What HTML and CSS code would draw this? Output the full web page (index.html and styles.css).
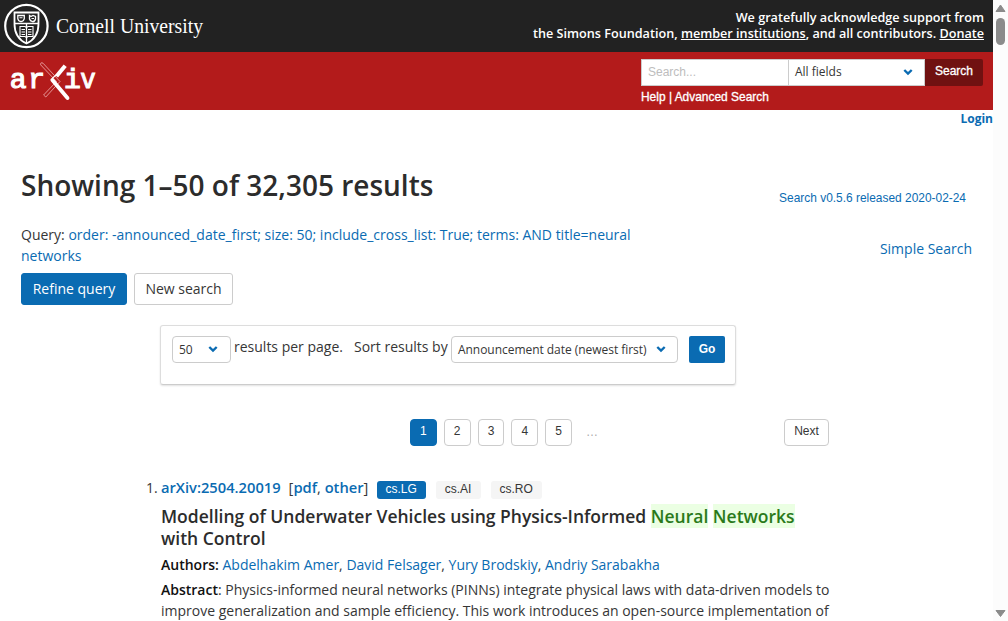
FILE: index.html
```html
<!DOCTYPE html>
<html lang="en">
<head>
<meta charset="utf-8">
<title>Search | arXiv e-print repository</title>
<link rel="stylesheet" href="styles.css">
</head>
<body>
<div class="page">
  <header class="support">
    <svg class="cornell" width="210" height="52" viewBox="0 0 210 52">
      <g fill="none" stroke="#fff">
        <circle cx="26.4" cy="26" r="21.2" stroke-width="2.2"/>
        <path stroke-width="1.8" d="M14.5 12.5H38.5V24C38.5 34 33 40.5 26.5 43.5C20 40.5 14.5 34 14.5 24Z"/>
        <path stroke-width="1.3" d="M15 23.5H38M26.5 24V43M17.8 15.5H24.3V18.5Q24 21 21 21.7Q18 21 17.8 18.5ZM29.5 15.5L31 16.5L33 15.4L35.5 16.5V19Q35 21.5 32.6 21.7Q30 21 29.5 19Z"/>
        <path stroke-width="1.1" d="M20 26.5H25L26.5 27.5L28 26.5H33V36.5H28L26.5 37.5L25 36.5H20ZM21.5 29.5H25M21.5 32H25M21.5 34.5H25M28 29.5H31.5M28 32H31.5M28 34.5H31.5M19.5 17.8H22.5M31.5 18.5H34"/>
      </g>
      <text x="56" y="33.3" textLength="147" lengthAdjust="spacingAndGlyphs">Cornell University</text>
    </svg>
    <p class="thanks"><span class="t1">We gratefully acknowledge support from</span><br><span class="t2">the Simons Foundation, <a>member institutions</a>, and all contributors. <a>Donate</a></span></p>
  </header>
  <div class="banner">
    <svg class="arxiv" width="100" height="58" viewBox="0 52 100 58">
      <g class="mark"><text x="9.8" y="88">a</text><text x="28.3" y="88">r</text><text x="64" y="88">i</text><text class="vee" x="81" y="88">v</text></g>
      <g fill="none">
        <path d="M43 63.2L60 81.5L45.8 97L43.6 95L56.5 81.5L40.6 64.8Q40.4 61.8 43 63.2Z" stroke="#f0b4b4" stroke-width=".8"/>
        <path d="M65.2 65.8L56.5 76.2" stroke="#fff" stroke-width="4"/>
        <path d="M52.3 80L67.5 98" stroke="#fff" stroke-width="3.8" stroke-linecap="round"/>
        <path d="M57 74.5Q51 78.5 52.3 80" stroke="#fff" stroke-width="1.5"/>
      </g>
    </svg>
    <div class="mini-search">
      <div class="fields"><div class="query-box">Search...</div><div class="field-box"><span>All fields</span><svg class="chev" viewBox="0 0 10 8"><path d="M1.3 2L5 5.5L8.7 2"/></svg></div><div class="search-btn">Search</div></div>
      <p class="help"><a>Help</a> | <a>Advanced Search</a></p>
    </div>
  </div>
  <div class="login"><a>Login</a></div>
  <main>
    <div class="heading"><h1>Showing 1–50 of 32,305 results</h1><a class="version">Search v0.5.6 released 2020-02-24</a></div>
    <div class="query-row">
      <div class="query">Query: <a>order: -announced_date_first; size: 50; include_cross_list: True; terms: AND title=neural<br>networks</a></div>
      <a class="simple">Simple Search</a>
    </div>
    <div class="buttons"><a class="btn primary">Refine query</a><a class="btn">New search</a></div>
    <div class="sortbox">
      <div class="select size"><span>50</span><svg class="chev" viewBox="0 0 10 8"><path d="M1.3 2L5 5.5L8.7 2"/></svg></div>
      <span class="per">results per page.</span><span class="sort">Sort results by</span>
      <div class="select order"><span>Announcement date (newest first)</span><svg class="chev" viewBox="0 0 10 8"><path d="M1.3 2L5 5.5L8.7 2"/></svg></div>
      <div class="go">Go</div>
    </div>
    <nav class="pages"><a class="current">1</a><a>2</a><a>3</a><a>4</a><a>5</a><span>…</span><a class="next">Next</a></nav>
    <article class="result">
      <span class="num">1.</span>
      <div class="body">
        <div class="ids"><a class="aid">arXiv:2504.20019</a><span class="formats">[<a>pdf</a>, <a>other</a>]</span><span class="tag lead">cs.LG</span><span class="tag">cs.AI</span><span class="tag ro">cs.RO</span></div>
        <h2><span class="ti">Modelling of Underwater Vehicles using Physics-Informed <mark>Neural</mark> <mark>Networks</mark></span><br>with Control</h2>
        <p class="authors"><b>Authors:</b> <a>Abdelhakim Amer</a>, <a>David Felsager</a>, <a>Yury Brodskiy</a>, <a>Andriy Sarabakha</a></p>
        <p class="abstract"><b>Abstract</b>: Physics-informed neural networks (PINNs) integrate physical laws with data-driven models to<br>improve generalization and sample efficiency. This work introduces an open-source implementation of</p>
      </div>
    </article>
  </main>
</div>
<div class="scrollbar">
  <svg width="15" height="14" viewBox="0 0 15 14"><path d="M7.5 5L12 11.5H3Z" fill="#8b8b8b" stroke="#8b8b8b" stroke-linejoin="round"/></svg>
  <i></i>
  <svg class="down" width="15" height="14" viewBox="0 0 15 14"><path d="M3 3.5H12L7.5 9.5Z" fill="#8b8b8b" stroke="#8b8b8b" stroke-linejoin="round"/></svg>
</div>
</body>
</html>
```
FILE: styles.css
```css
* { box-sizing: border-box; }
body { margin: 0; height: 621px; overflow: hidden; display: flex; background: #fff; color: #363636; font: 14px/21px "Open Sans", sans-serif; }
h1, h2, p { margin: 0; }
a { color: #0a6bb2; white-space: nowrap; }
.page { width: 993px; height: 621px; overflow: hidden; }

.support { height: 52px; background: #222; display: flex; justify-content: space-between; }
.cornell text { font: 20.5px "Liberation Serif", serif; fill: #fff; }
.thanks { padding: 9px 9px 0 0; text-align: right; color: #fff; font-size: 12.64px; font-weight: 600; line-height: 16px; white-space: nowrap; }
.thanks a { color: #fff; text-decoration: underline; }

.banner { height: 58px; background: #b31b1b; display: flex; justify-content: space-between; }
.mark text { font: 28px "Liberation Mono", monospace; fill: #fff; stroke: #fff; stroke-width: 1.2px; }
.mark .vee { font: 28px "Liberation Sans", sans-serif; stroke-width: .9px; }
.mini-search { width: 342px; margin-right: 10px; padding-top: 7px; font: 12px/18px "Liberation Sans", sans-serif; }
.fields { display: flex; height: 27px; }
.query-box { width: 148px; border: 1px solid #ccc; padding: 3px 6px; background: #fff; color: #bdbdbd; }
.field-box { width: 136px; border: 1px solid #ccc; border-left: 0; padding: 0 11px 2px 6px; background: #fff; display: flex; align-items: center; justify-content: space-between; font: 12px/23px "Open Sans", sans-serif; }
.search-btn { width: 58px; background: #701111; color: #fff; text-align: center; line-height: 24px; border-radius: 0 2px 2px 0; -webkit-text-stroke: .3px #fff; }
.chev { width: 10px; height: 8px; flex: none; fill: none; stroke: #0a6bb2; stroke-width: 2.4; }
.help, .help a { color: #fff; }
.help { margin-top: 2px; font-size: 11.95px; -webkit-text-stroke: .3px #fff; }

.login { height: 17px; text-align: right; font-size: 12px; font-weight: 700; line-height: 18px; }
main { padding-left: 21px; }
.heading { height: 97px; padding-top: 41px; display: flex; justify-content: space-between; }
h1 { font-size: 28px; line-height: 34px; font-weight: 600; white-space: nowrap; color: #2c2c2c; }
.version { margin: 20px 27px 0 0; font: 11.93px/20px "Liberation Sans", sans-serif; }
.query-row { display: flex; justify-content: space-between; height: 49px; }
.query { white-space: nowrap; }
.simple { margin: 14px 21px 0 0; }
.buttons { display: flex; gap: 7px; height: 32px; }
.btn { width: 99px; height: 32px; border: 1px solid #ccc; border-radius: 3px; text-align: center; line-height: 30px; color: #363636; }
.btn.primary { width: 106px; background: #0a6bb2; border-color: #0a6bb2; color: #fff; }

.sortbox { width: 576px; height: 60px; margin: 20px 0 0 139px; padding: 10px 10px 0 11px; border: 1px solid #ddd; border-bottom-color: #ccc; border-radius: 3px; box-shadow: 0 1px 2px rgba(0,0,0,.12); display: flex; white-space: nowrap; }
.select { flex: none; height: 27px; border: 1px solid #ccc; border-radius: 4px; display: flex; align-items: center; justify-content: space-between; padding: 0 11px 0 7px; font-size: 12px; }
.select .chev { margin-bottom: 2px; }
.size { width: 59px; padding-left: 6px; padding-right: 12px; margin-right: 3px; }
.order { width: 227px; margin-left: 3px; padding: 0 11px 0 6px; letter-spacing: -.04px; }
.per { width: 120px; flex: none; }
.sort { width: 94px; flex: none; }
.go { width: 36px; flex: none; height: 27px; margin-left: 11px; background: #0a6bb2; color: #fff; border-radius: 2px; text-align: center; font: 700 12px/26px "Liberation Sans", sans-serif; }

.pages { height: 27px; width: 419px; margin: 34px 0 0 389px; display: flex; gap: 7px; font: 12px/22px "Liberation Sans", sans-serif; }
.pages a { width: 26.8px; border: 1px solid #ccc; border-radius: 4px; text-align: center; color: #363636; }
.pages a.current { background: #0a6bb2; border-color: #0a6bb2; color: #fff; }
.pages span { padding: 2px 0 0 7px; color: #aaa; }
.pages a.next { width: 45px; margin-left: auto; }

.result { display: flex; margin-top: 31px; white-space: nowrap; }
.num { width: 15px; margin-left: 125px; flex: none; font-size: 14px; }
.ids { display: flex; height: 21px; font-size: 14.7px; font-weight: 600; }
.formats { width: 80px; margin: 0 8px 0 8px; font-weight: 400; }
.formats a { font-weight: 600; }
.tag { height: 18px; width: 45px; margin: 4px 0 0 10px; border-radius: 3px; background: #f5f5f5; text-align: center; font: 12px/16px "Liberation Sans", sans-serif; }
.tag.lead { width: 49px; margin-left: 0; background: #0a6bb2; color: #fff; }
.tag.ro { width: 51px; }
h2 { margin-top: 7px; font-size: 17.5px; font-weight: 600; line-height: 22px; color: #2c2c2c; }
mark { color: #2a7a1a; background: #ebffe3; }
.authors { margin-top: 5px; }
.abstract { margin-top: 4px; }
b { font-weight: 600; color: #111; }

.scrollbar { width: 15px; height: 621px; background: #fcfcfc; display: flex; flex-direction: column; align-items: center; }
.scrollbar i { width: 9px; height: 27px; margin-top: 4px; border-radius: 5px; background: #8b8b8b; }
.scrollbar .down { margin-top: auto; }
```
